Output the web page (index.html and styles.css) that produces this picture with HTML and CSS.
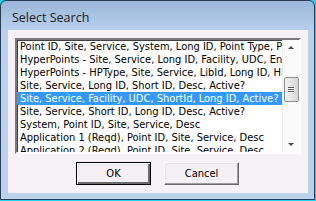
FILE: index.html
```html
<!DOCTYPE html>
<html>
<head>
<meta charset="utf-8">
<link rel="stylesheet" href="styles.css">
</head>
<body>
<div class="window">
  <div class="titlebar">Select Search</div>
  <div class="client">
    <div class="listbox">
      <ul class="items">
        <li>Point ID, Site, Service, System, Long ID, Point Type, Point Name</li>
        <li>HyperPoints - Site, Service, Long ID, Facility, UDC, Enabled</li>
        <li>HyperPoints - HPType, Site, Service, LibId, Long ID, HPName</li>
        <li>Site, Service, Long ID, Short ID, Desc, Active?</li>
        <li class="selected">Site, Service, Facility, UDC, ShortId, Long ID, Active?</li>
        <li>Site, Service, Short ID, Long ID, Desc, Active?</li>
        <li>System, Point ID, Site, Service, Desc</li>
        <li>Application 1 (Reqd), Point ID, Site, Service, Desc</li>
        <li>Application 2 (Reqd), Point ID, Site, Service, Desc</li>
      </ul>
      <div class="scrollbar">
        <div class="arrow up"></div>
        <div class="track"><div class="thumb"><span></span><span></span><span></span></div></div>
        <div class="arrow down"></div>
      </div>
    </div>
    <div class="buttons">
      <button class="btn default">OK</button>
      <button class="btn">Cancel</button>
    </div>
  </div>
</div>
</body>
</html>
```

FILE: styles.css
```css
html, body {
  margin: 0;
  padding: 0;
}
body {
  width: 316px;
  height: 201px;
  background: #1fd4ee;
  overflow: hidden;
}
.window {
  box-sizing: border-box;
  width: 315px;
  height: 200px;
  border: 1px solid #2b3d55;
  border-radius: 6px 6px 0 0;
  background: linear-gradient(to bottom, #9ab6d8 0px, #a9c3e2 14px, #b8d0ec 30px, #bad2ec 100%);
  padding: 0 6px 6px 7px;
  display: flex;
  flex-direction: column;
}
.titlebar {
  height: 29px;
  box-sizing: border-box;
  padding: 10px 0 0 4px;
  font-family: "Open Sans", "Noto Sans", sans-serif;
  font-size: 12.5px;
  line-height: 14px;
  color: #1b1b1b;
}
.client {
  flex: 1;
  background: #f5f1f4;
  padding: 8px 7px 0 7px;
  display: flex;
  flex-direction: column;
}
.listbox {
  box-sizing: border-box;
  width: 286px;
  height: 116px;
  border-style: solid;
  border-width: 2px;
  border-color: #7a7a7a #ffffff #ffffff #7a7a7a;
  box-shadow: inset 1px 1px 0 #404040;
  background: #ffffff;
  display: flex;
  overflow: hidden;
}
.items {
  list-style: none;
  margin: 0;
  padding: 0;
  flex: 1;
  min-width: 0;
  font-family: "DejaVu Sans Condensed", "Liberation Sans", sans-serif;
  font-size: 11px;
  line-height: 13px;
  color: #000;
}
.items li {
  height: 13px;
  padding-left: 3px;
  white-space: nowrap;
  overflow: hidden;
}
.items li.selected {
  background: #3399ff;
  color: #fff;
}
.scrollbar {
  width: 16px;
  flex: none;
  background: #fbfafb;
  border-left: 1px solid #ececec;
  display: flex;
  flex-direction: column;
  align-items: center;
}
.arrow {
  width: 0;
  height: 0;
  border-left: 3px solid transparent;
  border-right: 3px solid transparent;
}
.arrow.up {
  margin-top: 6px;
  border-bottom: 3px solid #4a4a4a;
}
.arrow.down {
  margin-bottom: 6px;
  border-top: 3px solid #4a4a4a;
}
.track {
  flex: 1;
  width: 100%;
  padding-top: 28px;
  box-sizing: border-box;
  display: flex;
  justify-content: center;
}
.thumb {
  box-sizing: border-box;
  width: 15px;
  height: 25px;
  border: 1px solid #8e8f8f;
  border-radius: 2px;
  background: linear-gradient(to right, #f2f2f2, #e4e4e4 50%, #d6d6d6);
  display: flex;
  flex-direction: column;
  align-items: center;
  justify-content: center;
  gap: 1px;
}
.thumb span {
  display: block;
  width: 6px;
  height: 1px;
  background: #5a5a5a;
  box-shadow: 0 1px 0 #ffffff;
}
.buttons {
  display: flex;
  gap: 13px;
  margin-top: 8px;
  padding-left: 61px;
}
.btn {
  box-sizing: border-box;
  width: 75px;
  height: 23px;
  margin: 0;
  padding: 0;
  background: #f4f0f3;
  border-style: solid;
  border-width: 1px;
  border-color: #ffffff #6b6b6b #6b6b6b #ffffff;
  box-shadow: inset -1px -1px 0 #a0a0a0, inset 1px 1px 0 #e6e6e6;
  font-family: "DejaVu Sans Condensed", "Liberation Sans", sans-serif;
  font-size: 11px;
  color: #000;
}
.btn.default {
  border: 1px solid #000;
  box-shadow: inset 1px 1px 0 #ffffff, inset -2px -2px 0 #6b6b6b, inset 2px 2px 0 #e6e6e6;
}
```
